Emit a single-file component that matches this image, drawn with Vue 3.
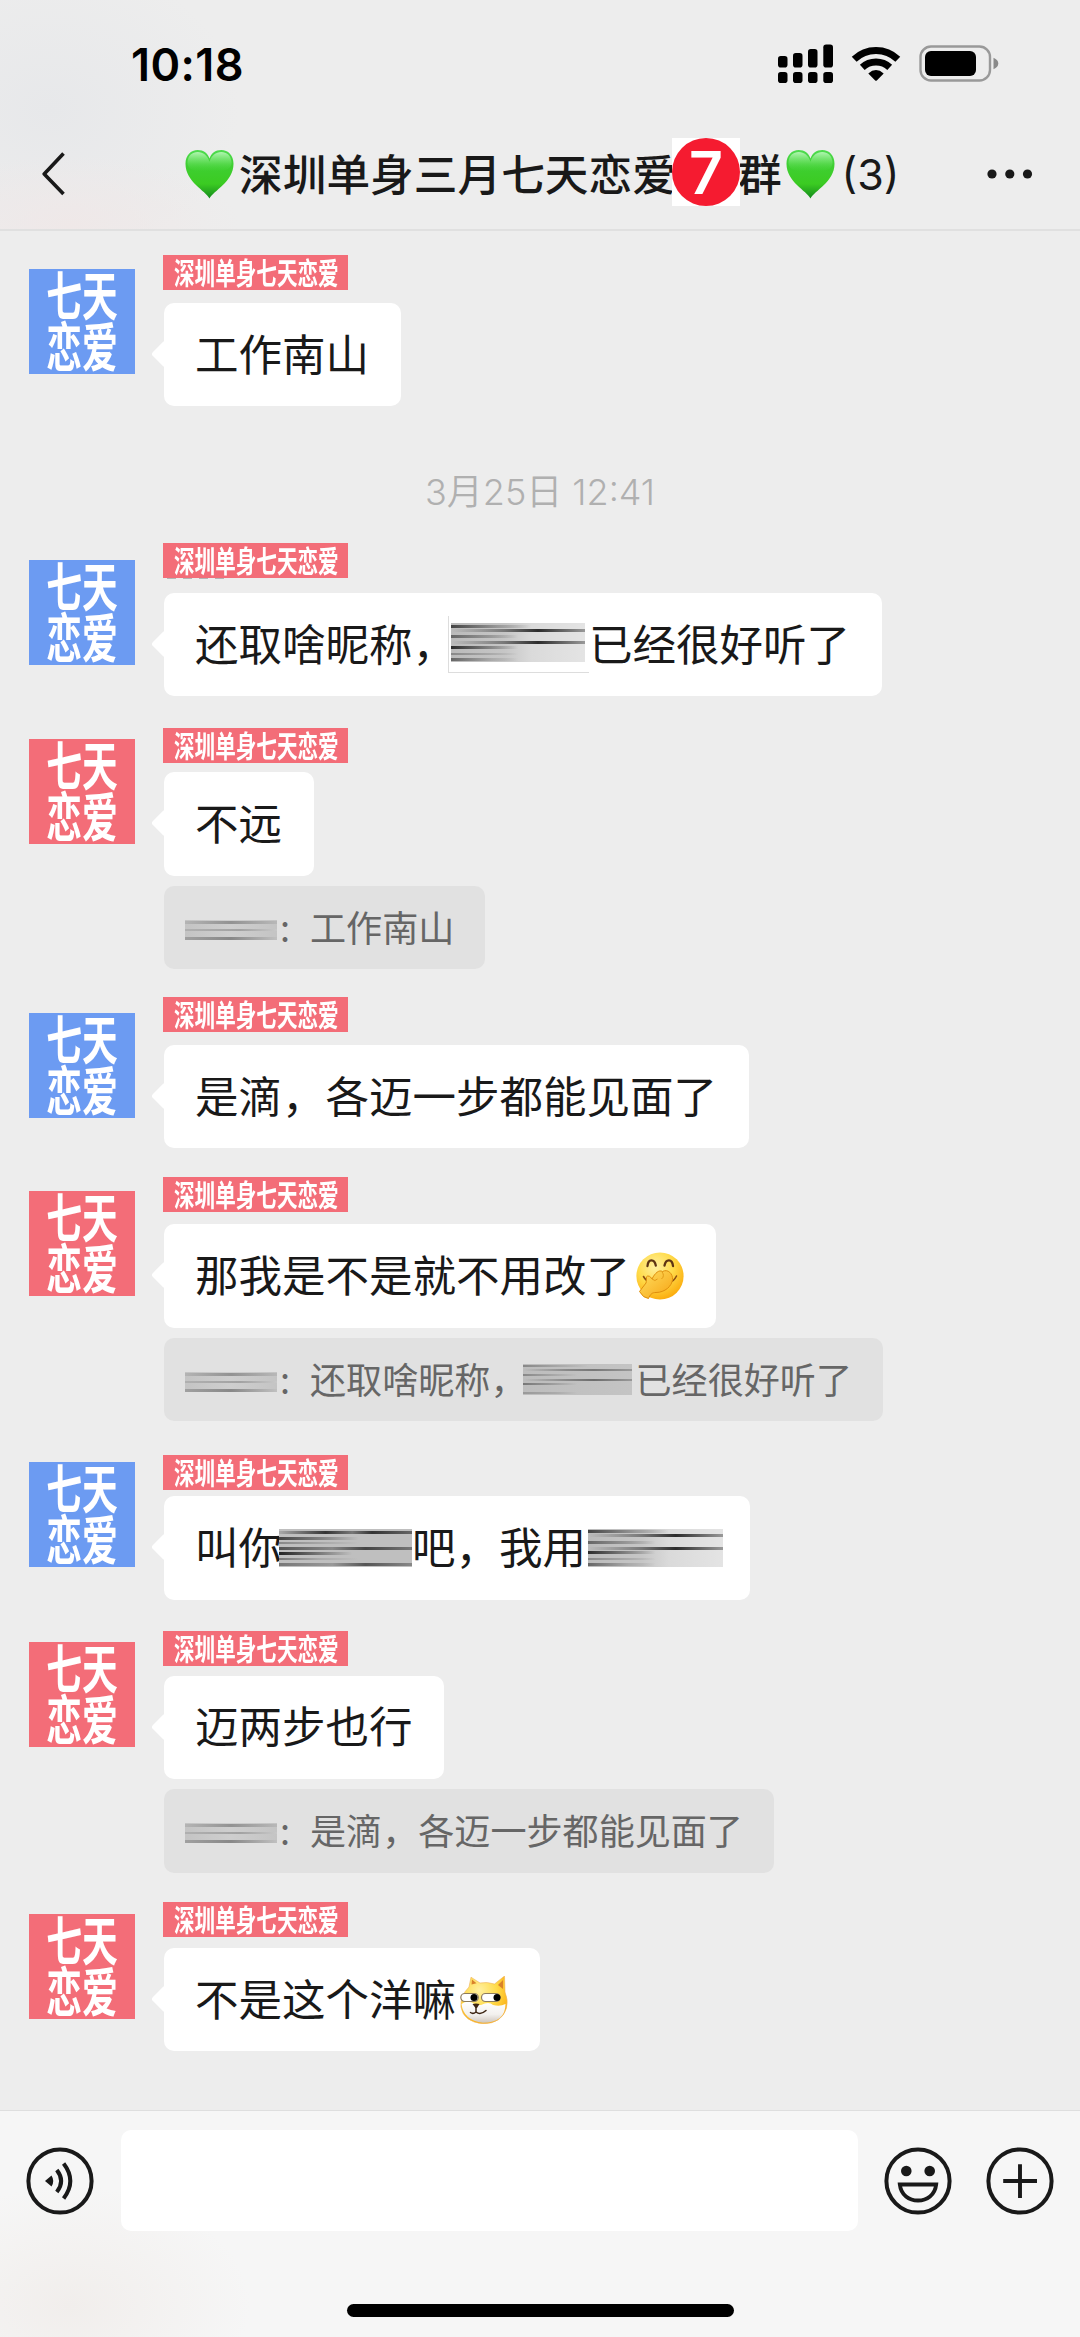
<script setup>
const tag = '深圳单身七天恋爱'

const messages = [
  { tone: 'blue', top: 24, avatar: 14, gap: 13, parts: [{ t: '工作南山' }] },
  { time: '3月25日 12:41' },
  { tone: 'blue', top: 0, avatar: 17, gap: 15, worn: true, parts: [{ t: '还取啥昵称，' }, { mask: 'framed' }, { t: '已经很好听了' }] },
  { tone: 'red', top: 32, avatar: 11, gap: 9, parts: [{ t: '不远' }], quote: [{ t: '工作南山' }] },
  { tone: 'blue', top: 28, avatar: 16, gap: 13, parts: [{ t: '是滴，各迈一步都能见面了' }] },
  { tone: 'red', top: 29, avatar: 14, gap: 12, parts: [{ t: '那我是不是就不用改了' }, { emoji: 'giggle' }], quote: [{ t: '还取啥昵称，' }, { mask: 'small' }, { t: '已经很好听了' }] },
  { tone: 'blue', top: 34, avatar: 7, gap: 6, parts: [{ t: '叫你' }, { mask: 'dark' }, { t: '吧，我用' }, { mask: 'light' }] },
  { tone: 'red', top: 31, avatar: 11, gap: 10, parts: [{ t: '迈两步也行' }], quote: [{ t: '是滴，各迈一步都能见面了' }] },
  { tone: 'red', top: 29.5, avatar: 12, gap: 11, parts: [{ t: '不是这个洋嘛' }, { emoji: 'doge' }] },
]
</script>

<template>
  <div class="phone">
    <svg class="defs" width="0" height="0" aria-hidden="true">
      <defs>
        <linearGradient id="heartFill" x1="0" y1="0" x2="0" y2="1">
          <stop offset="0" stop-color="#4fdc50" />
          <stop offset=".3" stop-color="#3fcf33" />
          <stop offset=".7" stop-color="#3bcb22" />
          <stop offset="1" stop-color="#138a1c" />
        </linearGradient>
        <linearGradient id="heartShine" x1="0" y1="0" x2="0" y2="1">
          <stop offset="0" stop-color="#c4fac4" stop-opacity=".85" />
          <stop offset="1" stop-color="#58e04c" stop-opacity="0" />
        </linearGradient>
        <radialGradient id="faceFill" cx=".4" cy=".3" r=".75">
          <stop offset="0" stop-color="#fff0a0" />
          <stop offset=".5" stop-color="#ffdb4a" />
          <stop offset="1" stop-color="#fba808" />
        </radialGradient>
        <linearGradient id="handFill" x1="0" y1="0" x2="1" y2="1">
          <stop offset="0" stop-color="#ffdf62" />
          <stop offset="1" stop-color="#f6a413" />
        </linearGradient>
        <linearGradient id="muzzle" x1="0" y1="0" x2="0" y2="1">
          <stop offset="0" stop-color="#ffffff" />
          <stop offset=".6" stop-color="#f3f1ee" />
          <stop offset="1" stop-color="#cfc6bd" />
        </linearGradient>
      </defs>
    </svg>

    <header class="top">
      <div class="status">
        <span class="clock">10:18</span>
        <svg class="status-icons" width="222" height="42" viewBox="777 43 222 42">
          <g>
            <rect x="778" y="56" width="9.5" height="11.5" rx="2.8" />
            <rect x="793" y="53" width="9.5" height="14.5" rx="2.8" />
            <rect x="808" y="49" width="9.5" height="18.5" rx="2.8" />
            <rect x="823.3" y="44.5" width="9.7" height="23" rx="2.8" />
            <rect x="778" y="72" width="9.5" height="11" rx="2.8" />
            <rect x="793" y="72" width="9.5" height="11" rx="2.8" />
            <rect x="808" y="72" width="9.5" height="11" rx="2.8" />
            <rect x="823.3" y="72" width="9.7" height="11" rx="2.8" />
          </g>
          <g fill="none" stroke="#000" stroke-width="7">
            <path d="M854.2 59.2 A31.5 31.5 0 0 1 897.8 59.2" />
            <path d="M862.3 67.4 A20 20 0 0 1 889.7 67.4" />
          </g>
          <path d="M868.3 73.5 Q876 66.6 883.7 73.5 L876.8 80.4 Q876 81.2 875.2 80.4 Z" />
          <rect x="920.5" y="46.5" width="69.5" height="34" rx="10.5" fill="none" stroke="#999" stroke-width="2.4" />
          <rect x="925" y="51" width="51" height="25" rx="6" />
          <path d="M993.5 57.8 Q998.3 60 998.3 63.5 Q998.3 67 993.5 69.2 Z" fill="#8a8a8a" />
        </svg>
      </div>
      <div class="nav">
        <svg class="back" width="24" height="44" viewBox="0 0 24 44"><path d="M21.5 1.5 L2.2 22 L21.5 42" fill="none" stroke="#191919" stroke-width="3.6" stroke-linejoin="round" /></svg>
        <h1 class="title">
          <svg class="heart" viewBox="0 0 50 50"><path d="M25 50 C21 42 0.5 33 0.5 14.5 C0.5 6 6 .6 13 .6 C19 .6 23.3 4 25 9.3 C26.7 4 31 .6 37 .6 C44 .6 49.5 6 49.5 14.5 C49.5 33 29 42 25 50 Z" fill="url(#heartFill)" /><path d="M25 22 C10 24 2 20 2.5 13 C3 6 7.5 2.5 13 2.5 C18.5 2.5 23 6 25 12.5 C27 6 31.5 2.5 37 2.5 C42.5 2.5 47 6 47.5 13 C48 20 40 24 25 22 Z" fill="url(#heartShine)" /></svg>
          <span class="name">深圳单身三月七天恋爱</span>
          <span class="seven"><b>7</b></span>
          <span class="name">群</span>
          <svg class="heart second" viewBox="0 0 50 50"><path d="M25 50 C21 42 0.5 33 0.5 14.5 C0.5 6 6 .6 13 .6 C19 .6 23.3 4 25 9.3 C26.7 4 31 .6 37 .6 C44 .6 49.5 6 49.5 14.5 C49.5 33 29 42 25 50 Z" fill="url(#heartFill)" /><path d="M25 22 C10 24 2 20 2.5 13 C3 6 7.5 2.5 13 2.5 C18.5 2.5 23 6 25 12.5 C27 6 31.5 2.5 37 2.5 C42.5 2.5 47 6 47.5 13 C48 20 40 24 25 22 Z" fill="url(#heartShine)" /></svg>
          <span class="count">(3)</span>
        </h1>
        <svg class="more" width="46" height="10" viewBox="0 0 46 10"><circle cx="5" cy="5" r="4.6" /><circle cx="22.8" cy="5" r="4.6" /><circle cx="40.5" cy="5" r="4.6" /></svg>
      </div>
    </header>

    <main class="chat">
      <template v-for="(m, i) in messages" :key="i">
        <div v-if="m.time" class="time">{{ m.time }}</div>
        <article v-else class="msg" :style="{ marginTop: m.top + 'px' }">
          <div class="avatar" :class="m.tone" :style="{ marginTop: m.avatar + 'px' }">
            <div class="avatar-text"><span>七天</span><span>恋爱</span></div>
          </div>
          <div class="body">
            <div class="tag" :class="{ worn: m.worn }" :style="{ marginBottom: m.gap + 'px' }"><span>{{ tag }}</span></div>
            <div class="bubble">
              <template v-for="(p, j) in m.parts" :key="j">
                <span v-if="p.t">{{ p.t }}</span>
                <i v-else-if="p.mask" class="mask" :class="p.mask"></i>
                <svg v-else-if="p.emoji === 'giggle'" class="emoji giggle" viewBox="0 0 48 48">
                  <circle cx="24" cy="24" r="23.6" fill="url(#faceFill)" />
                  <path d="M11.5 14 C12 6.5 18.5 6.5 19.8 13.5 M28.5 13.5 C29.8 6.5 36.3 6.5 37 14" fill="none" stroke="#5e3413" stroke-width="2.3" stroke-linecap="round" />
                  <path d="M7.5 24.5 Q11 31 17 28 M40.5 24 Q37 31 32 30" fill="none" stroke="#8a4d12" stroke-width="1.6" stroke-linecap="round" />
                  <path d="M3.5 39.5 L10 31 C11 27 9.5 24 12 24 C14.5 24 15 26 16 27 C19 21 23 17.5 26.5 19.5 C32 16.5 37 22 36.5 27.5 C36 34 29 40.5 20 40.5 C16 40.5 14.5 42 12.5 46.5 Q7 46 3.5 39.5 Z" fill="url(#handFill)" stroke="#df8d0c" stroke-width="1" />
                  <path d="M16 27 Q19 30 21.5 27 M26 19.8 Q29 24 25.5 27" fill="none" stroke="#e29a16" stroke-width="1" />
                </svg>
                <svg v-else class="emoji" viewBox="0 0 48 48">
                  <path d="M9 11 L11 1.2 L20 7 Q27 5.5 34.5 8 L44.5 0 L45 16 Q48.5 24 46.5 32 Q42 47.5 23 47.8 Q3.5 46 1 31 Q0 20 9 11 Z" fill="url(#faceFill)" stroke="#efb25b" stroke-width=".6" />
                  <path d="M11.5 8.5 L12 3.5 L16.5 7.2 Z M38 9 L43 4 L43 13 Z" fill="#d9822b" />
                  <path d="M1.5 28 Q6 24.5 12 26.5 L16 29 L21 29 Q29 25 33 29 Q40 31 45.5 28 Q45.5 46.5 23 46.8 Q3.5 44.5 1.5 28 Z" fill="url(#muzzle)" />
                  <rect x=".8" y="17.5" width="17.5" height="8" rx="4" fill="#fff" stroke="#8d7b5c" stroke-width="1.2" />
                  <rect x="21.5" y="17.5" width="18.5" height="8" rx="4" fill="#fff" stroke="#8d7b5c" stroke-width="1.2" />
                  <circle cx="14" cy="21.5" r="3.5" /><circle cx="37" cy="21.5" r="3.5" />
                  <path d="M12.5 28 Q16 26.8 19.5 28 L17 32 L15.5 32 Z" fill="#3d2512" />
                  <path d="M16 31.5 V36 Q13 38.5 10.5 36.5 M16 36 Q20.5 39.5 26 34.5" fill="none" stroke="#3d2512" stroke-width="1.5" stroke-linecap="round" />
                </svg>
              </template>
            </div>
            <div v-if="m.quote" class="quote">
              <i class="mask sender"></i><span class="colon">:</span>
              <template v-for="(p, j) in m.quote" :key="j">
                <span v-if="p.t">{{ p.t }}</span>
                <i v-else class="mask" :class="p.mask"></i>
              </template>
            </div>
          </div>
        </article>
      </template>
    </main>

    <footer class="bottom">
      <div class="tools">
        <svg class="tool" viewBox="0 0 68 68">
          <circle cx="34" cy="34" r="31.6" fill="none" stroke="#191919" stroke-width="4" />
          <path d="M19 34 L25.5 28.5 Q29 34 25.5 39.5 Z" fill="#191919" />
          <path d="M30.8 23 Q39.5 34 30.8 45 M37.6 16.5 Q51 34 37.6 51.5" fill="none" stroke="#191919" stroke-width="4" />
        </svg>
        <div class="input"></div>
        <svg class="tool smile" viewBox="0 0 68 68">
          <circle cx="34" cy="34" r="31.6" fill="none" stroke="#191919" stroke-width="4" />
          <circle cx="22.3" cy="24" r="5.3" fill="#191919" /><circle cx="45.7" cy="24" r="5.3" fill="#191919" />
          <path d="M15.8 37.5 H52.2 C51 48 43 53.5 34 53.5 C25 53.5 17 48 15.8 37.5 Z" fill="none" stroke="#191919" stroke-width="3.8" />
        </svg>
        <svg class="tool" viewBox="0 0 68 68">
          <circle cx="34" cy="34" r="31.6" fill="none" stroke="#191919" stroke-width="4" />
          <path d="M34 17.2 V51 M17.2 34 H51" stroke="#191919" stroke-width="3.9" />
        </svg>
      </div>
      <div class="home"></div>
    </footer>
  </div>
</template>

<style>
html, body { margin: 0; background: #ededed; }
</style>

<style scoped>
* { box-sizing: border-box; }
.phone {
  width: 1080px;
  height: 2337px;
  display: flex;
  flex-direction: column;
  overflow: hidden;
  background: #ededed;
  color: #191919;
  font-family: "Noto Sans CJK SC", sans-serif;
}
.defs { position: absolute; }
.top {
  height: 231px;
  flex: none;
  border-bottom: 2px solid #e0e0e0;
  background:
    radial-gradient(ellipse 170px 70px at 70px 225px, #efe8e8, transparent),
    radial-gradient(ellipse 190px 150px at 50px 110px, #e7e8ea, transparent),
    #ededed;
}
.status {
  height: 120px;
  display: flex;
  align-items: flex-start;
  justify-content: space-between;
  padding: 43px 81px 0 131px;
}
.clock {
  font: 600 45px/44px Inter, sans-serif;
  color: #000;
  letter-spacing: 0.4px;
}
.nav {
  height: 108px;
  display: flex;
  align-items: center;
}
.back { margin-left: 42px; flex: none; }
.title {
  margin: 0 0 0 119px;
  display: flex;
  align-items: center;
  font-size: 43.7px;
  line-height: 60px;
  font-weight: 500;
  white-space: nowrap;
}
.heart { width: 49px; height: 50px; margin-right: 5px; flex: none; }
.heart.second { margin: 0 0 0 4px; }
.name { flex: none; padding-bottom: 4px; }
.seven {
  width: 68px;
  height: 68px;
  margin: -4px -2px 0 -4px;
  background: #fff;
  position: relative;
  z-index: 1;
}
.seven b {
  display: block;
  width: 68px;
  height: 68px;
  border-radius: 50%;
  background: #f51b30;
  color: #fff;
  font: 600 59px/70px Inter, sans-serif;
  text-align: center;
}
.count { font: 400 43px/60px Inter, sans-serif; margin-left: 7px; }
.more { margin-left: auto; margin-right: 47px; fill: #191919; }

.chat { height: 1879px; flex: none; }
.time {
  height: 136.7px;
  padding-top: 66px;
  line-height: 40px;
  font-size: 36px;
  text-align: center;
  color: #b0b0b0;
  font-family: Inter, "Noto Sans CJK SC", sans-serif;
  font-weight: 350;
}
.msg { display: flex; align-items: flex-start; padding-left: 29px; }
.avatar { width: 106px; height: 105px; flex: none; display: flow-root; }
.avatar.blue { background: #6c9bf2; }
.avatar.red { background: #f36d78; }
.avatar-text {
  width: 106px;
  margin-top: -1px;
  color: #fff;
  font-size: 53px;
  font-weight: 700;
  line-height: 51px;
  display: flex;
  flex-direction: column;
  align-items: center;
  transform: scaleX(0.675);
}
.body { margin-left: 28px; display: flex; flex-direction: column; align-items: flex-start; }
.tag {
  width: 185px;
  height: 35px;
  background: #f36d78;
  color: #fff;
  font-size: 30px;
  font-weight: 700;
  line-height: 33px;
  white-space: nowrap;
}
.tag span {
  display: block;
  width: 240px;
  margin-left: 11px;
  transform: scaleX(0.686);
  transform-origin: 0 50%;
}
.tag.worn { position: relative; }
.tag.worn::after {
  content: "";
  position: absolute;
  left: 4px;
  top: 35px;
  width: 64px;
  height: 1px;
  background: repeating-linear-gradient(90deg, #b4b4b4 0 9px, #ededed 9px 16px);
}
.bubble, .quote {
  margin-left: 1px;
  display: flex;
  align-items: center;
  white-space: nowrap;
  border-radius: 10px;
}
.bubble {
  position: relative;
  height: 103.3px;
  padding: 0 31.5px 0 31px;
  background: #fff;
  font-size: 43.5px;
  line-height: 60px;
}
.bubble::before {
  content: "";
  position: absolute;
  left: -9px;
  top: 41px;
  width: 20px;
  height: 20px;
  border-radius: 3px;
  background: #fff;
  transform: rotate(45deg);
}
.bubble > span { position: relative; padding-bottom: 4px; }
.quote {
  height: 83.3px;
  margin-top: 10.3px;
  padding: 0 31px 0 21px;
  background: #e1e1e1;
  color: #666;
  font-size: 36.1px;
  line-height: 50px;
}
.quote > span { padding-bottom: 4px; }
.quote > .colon { width: 33px; padding-left: 3px; }
.emoji { width: 48px; height: 48px; margin-left: 4px; }
.giggle { margin-left: 6px; }
.mask { display: block; flex: none; }
.sender {
  width: 92px;
  height: 20px;
  margin-top: 4px;
  filter: blur(0.5px);
  background:
    linear-gradient(90deg, #b4b4b4, #929292 50%, #b8b8b8) 0 1px / 100% 3px no-repeat,
    linear-gradient(90deg, #b0b0b0, #a2a2a2 60%, #c8c8c8) 0 9px / 100% 2px no-repeat,
    linear-gradient(90deg, #a0a0a0, #888 50%, #c0c0c0) 0 17px / 100% 3px no-repeat,
    linear-gradient(90deg, #c4c4c4, #cecece 50%, #c4c4c4);
}
.framed {
  width: 141px;
  height: 57px;
  margin: 0 0 0 -8px;
  border-left: 1px solid #ddd;
  border-bottom: 1px solid #ddd;
  padding: 7px 4px 9px 2px;
}
.framed::before, .small, .light {
  background:
    linear-gradient(90deg, #444, #999 35%, transparent 60%) 0 4% / 100% 3px no-repeat,
    linear-gradient(90deg, transparent, #777 40%, #2c2c2c 65%, #999) 0 15% / 100% 3px no-repeat,
    linear-gradient(90deg, #666, #999 30%, transparent 50%) 0 33% / 100% 3px no-repeat,
    linear-gradient(90deg, transparent, #777 40%, #2c2c2c 65%, #999) 0 50% / 100% 3px no-repeat,
    linear-gradient(90deg, #2c2c2c, #777 25%, transparent 50%) 0 64% / 100% 3px no-repeat,
    linear-gradient(90deg, #888, #aaa 30%, transparent 50%) 0 80% / 100% 2px no-repeat,
    linear-gradient(90deg, #666, #aaa 30%, transparent 50%) 0 96% / 100% 3px no-repeat,
    linear-gradient(90deg, #bbb, #c6c6c6 40%, #dadada 60%, #e4e4e4);
  filter: blur(0.5px);
}
.framed::before { content: ""; display: block; height: 39px; width: 134px; }
.small {
  width: 109px;
  height: 31px;
  margin: 0 3px 0 -3px;
  background:
    linear-gradient(90deg, #888, #aaa 35%, transparent 60%) 0 4% / 100% 2px no-repeat,
    linear-gradient(90deg, transparent, #888 40%, #777 65%, #999) 0 15% / 100% 2px no-repeat,
    linear-gradient(90deg, #888, #aaa 30%, transparent 50%) 0 33% / 100% 2px no-repeat,
    linear-gradient(90deg, transparent, #888 40%, #6c6c6c 65%, #999) 0 50% / 100% 2px no-repeat,
    linear-gradient(90deg, #777, #999 25%, transparent 50%) 0 64% / 100% 2px no-repeat,
    linear-gradient(90deg, #999, #aaa 30%, transparent 50%) 0 96% / 100% 2px no-repeat,
    linear-gradient(90deg, #bdbdbd, #c4c4c4);
}
.light { width: 135px; height: 38px; margin: 0 -5px 0 2px; }
.dark {
  width: 133px;
  height: 38px;
  margin: 0 0 0 -3px;
  position: relative;
  filter: blur(0.5px);
  background:
    linear-gradient(90deg, #aaa, #333 35%, #777 55%, #333 70%, #666) 0 6% / 100% 3px no-repeat,
    linear-gradient(90deg, #444, #888 35%, transparent 60%) 0 22% / 100% 3px no-repeat,
    linear-gradient(90deg, #888, #aaa 35%, transparent 60%) 0 35% / 100% 2px no-repeat,
    linear-gradient(90deg, #555, #888 40%, #444 65%, #777) 0 50% / 100% 3px no-repeat,
    linear-gradient(90deg, #222, #777 30%, transparent 55%) 0 66% / 100% 3px no-repeat,
    linear-gradient(90deg, #777, #aaa 30%, transparent 60%) 0 80% / 100% 2px no-repeat,
    linear-gradient(90deg, #777, #999 40%, #555 65%, #888) 0 96% / 100% 3px no-repeat,
    #bfbfbf;
}

.bottom {
  flex: 1;
  border-top: 1px solid #dedede;
  background: radial-gradient(ellipse 180px 120px at 70px 195px, #f1eeec, transparent), #f6f6f6;
}
.tools { display: flex; align-items: center; padding: 19px 26px 0 26px; }
.tool { width: 68px; height: 68px; flex: none; }
.input { width: 737px; height: 101px; margin: 0 26px 0 27px; background: #fff; border-radius: 10px; }
.smile { margin-right: 34px; }
.home { width: 387px; height: 13px; margin: 73px auto 0; border-radius: 7px; background: #000; }
</style>
